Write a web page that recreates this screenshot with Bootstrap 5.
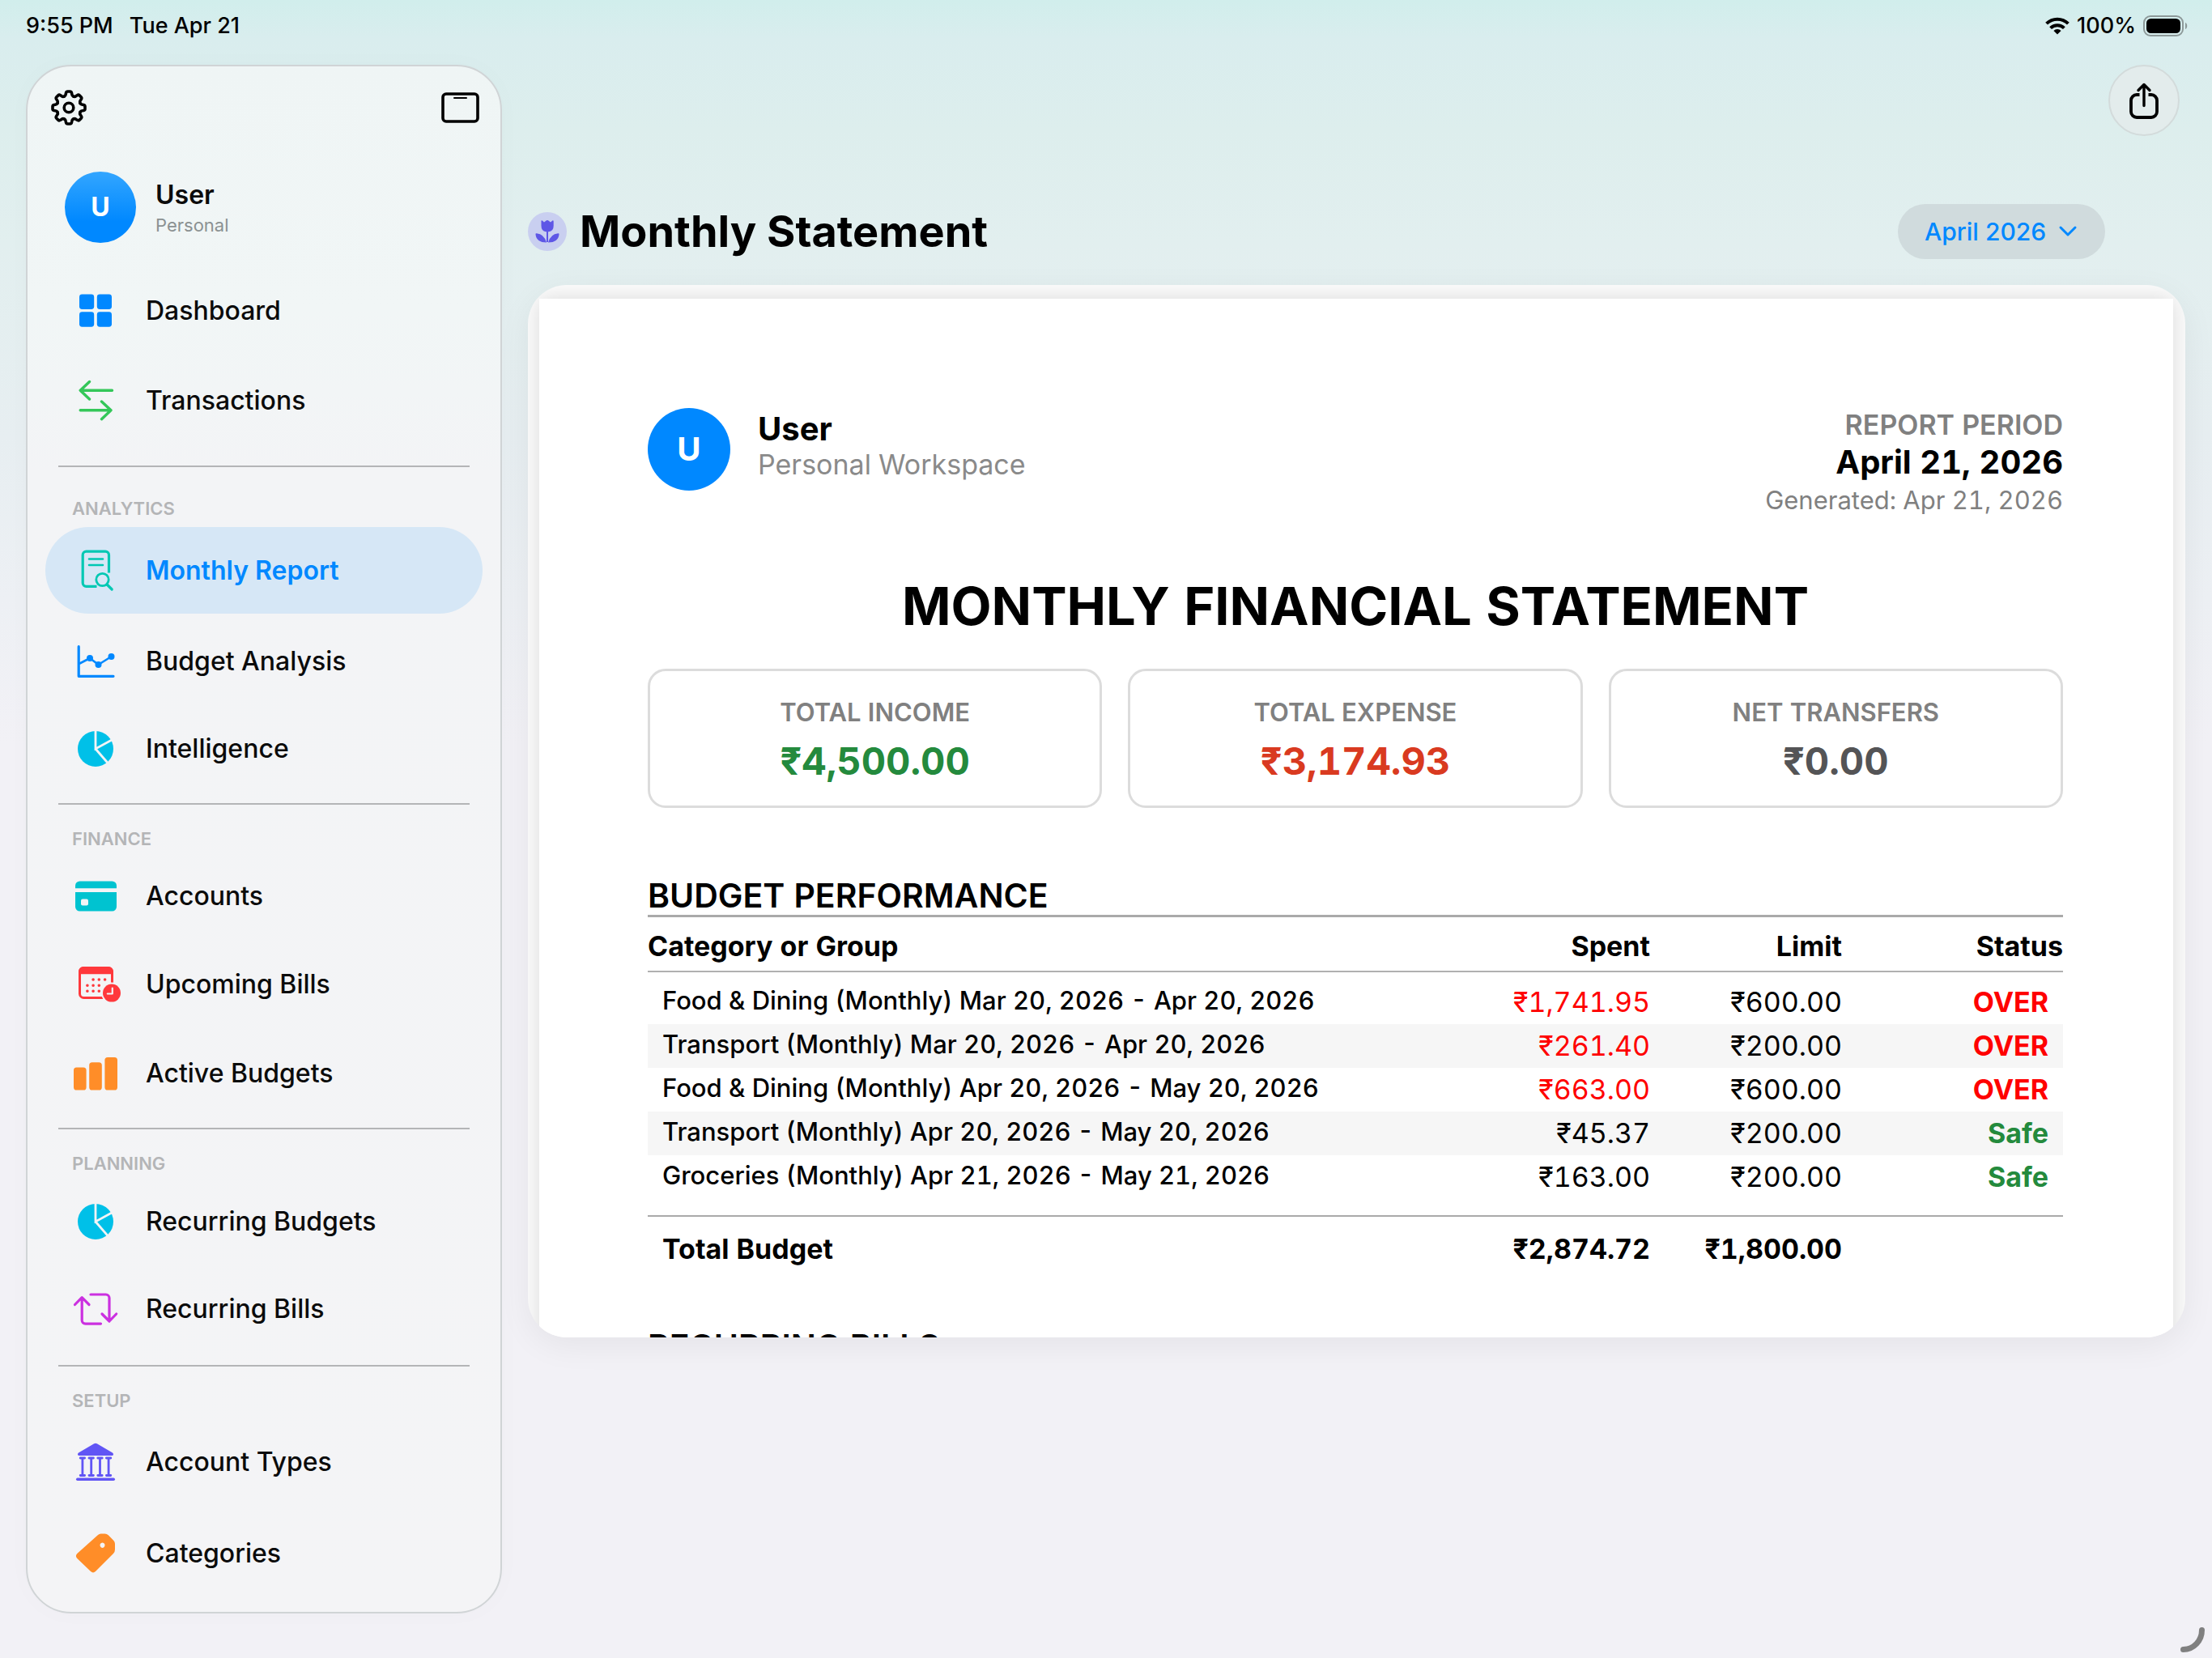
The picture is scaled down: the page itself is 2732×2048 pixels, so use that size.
<!DOCTYPE html>
<html lang="en">
<head>
<meta charset="utf-8">
<meta name="viewport" content="width=device-width, initial-scale=1">
<title>Monthly Statement</title>
<link href="https://cdn.jsdelivr.net/npm/bootstrap@5.3.0/dist/css/bootstrap.min.css" rel="stylesheet">
<style>
  :root { --blue: #0088ff; --line: #b4b5b7; }
  body {
    font-family: Inter, "Liberation Sans", sans-serif;
    font-size: 32px;
    line-height: 40px;
    color: #000;
    background: linear-gradient(180deg, #d1eeec 0, #d9edee 48px, #ddeeed 160px, #e2efef 300px, #e7eef1 540px, #edf0f4 740px, #f2f1f6 920px, #f2f1f6 100%) no-repeat;
  }
  a { text-decoration: none; color: inherit; }
  svg { display: block; flex: none; overflow: visible; }
  .stroke-icon { fill: none; stroke: currentColor; stroke-linecap: round; stroke-linejoin: round; }

  /* status bar */
  .status-bar { height: 64px; padding: 0 30px 0 32px; font-size: 27px; font-weight: 500; }
  .status-left { gap: 20px; }
  .status-right { gap: 9px; }

  /* sidebar */
  .layout { padding: 16px 33px 57px 32px; gap: 32px; }
  .sidebar {
    flex: 0 0 588px;
    padding: 29px 22px 20px 22px;
    border: 2px solid #d0d4d6;
    border-radius: 56px;
    background: linear-gradient(180deg, #eff5f5 0, #f1f6f6 300px, #f3f4f6 500px, #f4f4f6 100%);
    box-shadow: 0 0 32px rgba(0, 0, 0, .02);
    color: #0b0b0b;
  }
  .icon-btn { border: 0; padding: 0; background: none; color: #000; }
  .side-tools { padding: 0 4px 0 7px; height: 44px; }
  .profile { padding: 57px 0 34px 24px; gap: 24px; }
  .profile-text { padding-top: 5px; }
  .avatar { border-radius: 50%; color: #fff; font-weight: 700; }
  .avatar-side { width: 88px; height: 88px; font-size: 32px; background: linear-gradient(180deg, #33a6ff, #0088ff 70%); }
  .profile-name { font-weight: 600; line-height: 38px; }
  .profile-kind { font-size: 22px; line-height: 36px; color: #8b9192; }
  .side-link { padding: 28px 32px; gap: 32px; border-radius: 54px; font-weight: 500; }
  .side-link.active { background: #d6e7f6; color: var(--blue); font-weight: 600; }
  .side-group { gap: 8px; }
  .side-rule { margin: 18px 16px 0; height: 2px; background: var(--line); }
  .side-label { margin: 0 0 0 33px; padding: 27px 0 8px; font-size: 22px; line-height: 30px; font-weight: 600; color: #b4b5b7; }
  .side-rule.first { margin-top: 27px; margin-bottom: 9px; }

  /* page head */
  .share-btn { width: 88px; height: 88px; border: 2px solid #d3dbdb; border-radius: 50%; background: #e3ecec; color: #000; margin-right: 7px; }
  .page-head { margin: 84px 99px 32px 0; }
  .badge-dot { width: 48px; height: 48px; border-radius: 50%; background: #c9cff0; }
  .page-title { font-size: 54px; line-height: 68px; font-weight: 700; margin: 0 0 0 16px; }
  .month-select {
    width: auto; height: 68px; padding: 0 72px 0 33px;
    border: 0; border-radius: 34px;
    color: var(--blue); font-size: 30px; font-weight: 500;
    background: #d0dbdd url("data:image/svg+xml,%3Csvg xmlns='http://www.w3.org/2000/svg' viewBox='0 0 24 16'%3E%3Cpath d='M3 3l9 9 9-9' fill='none' stroke='%230088ff' stroke-width='3' stroke-linecap='round' stroke-linejoin='round'/%3E%3C/svg%3E") no-repeat right 34px center / 24px 16px;
  }

  /* report */
  .report-frame {
    height: calc(100vh - 748px);
    padding: 17px 15px 0 14px;
    border-radius: 48px;
    background: #fcfcfc;
    box-shadow: 0 10px 40px rgba(0, 0, 0, .06);
    overflow: hidden;
  }
  .report-sheet { min-height: 1600px; padding: 135px 136px 135px 134px; background: #fff; box-shadow: 0 0 26px rgba(0, 0, 0, .14); font-variant-numeric: tabular-nums; }
  .report-owner { gap: 34px; }
  .avatar-report { width: 102px; height: 102px; font-size: 40px; background: var(--blue); }
  .report-user { font-size: 40px; font-weight: 700; line-height: 44px; }
  .report-sub { font-size: 34px; line-height: 44px; color: #8a8a8a; }
  .meta-cap { font-size: 34px; line-height: 42px; font-weight: 600; color: #808080; }
  .meta-date { font-size: 40px; line-height: 50px; font-weight: 700; }
  .meta-gen { font-size: 31px; line-height: 44px; color: #808080; }
  .report-title { font-size: 65px; line-height: 80px; font-weight: 700; margin: 69px 0 37px; }
  .totals { gap: 32px; }
  .total-box { height: 172px; padding-top: 7px; border: 3px solid #dcdcdc; border-radius: 22px; background: #fff; }
  .total-cap { font-size: 31px; line-height: 40px; font-weight: 600; color: #808080; }
  .total-value { font-size: 47px; line-height: 64px; font-weight: 700; margin-top: 8px; }
  .tone-good { color: #248a3d !important; }
  .tone-bad { color: #d93a20; }
  .tone-flat { color: #545456; }
  .tone-over { color: #ff0000 !important; }
  .section-title { font-size: 41px; line-height: 48px; font-weight: 600; margin: 84px 0 0; }
  .budget-table { table-layout: fixed; margin: 0; border-top: 3px solid #aaa; --bs-table-bg: transparent; --bs-table-color: #000; color: #000; }
  .budget-table > :not(caption) > * > * { padding: 0; text-align: right; line-height: 54px; font-size: 34px; white-space: nowrap; }
  .budget-table > thead > tr > th { padding-top: 6px; line-height: 60px; font-weight: 700; border-bottom: 2px solid #b0b0b0; }
  .budget-table > :not(caption) > * > :first-child { text-align: left; }
  .budget-table > tbody::before, .budget-table > tbody::after { content: ""; display: block; height: 10px; }
  .budget-table > tbody::after { height: 20px; }
  .budget-table > tbody > tr > :first-child { padding-left: 18px; font-size: 31px; line-height: 50px; font-weight: 500; vertical-align: top; }
  .budget-table > tbody > tr > :last-child { padding-right: 18px; font-weight: 700; }
  .budget-table > tbody > tr:nth-child(even) > * { background: #f6f6f6; }
  .budget-table > tfoot > tr > * { line-height: 80px; font-weight: 700; border-top: 2px solid #aaa; }
  .budget-table > tfoot > tr > :first-child { padding-left: 18px; }
  .col-amount { width: 237px; }
  .col-status { width: 273px; }
  .section-title.next { margin-top: 56px; }
  .corner-mark { position: absolute; right: 9px; bottom: 9px; color: #808080; }
</style>
</head>
<body class="min-vh-100 d-flex flex-column position-relative">

<header class="status-bar d-flex align-items-center justify-content-between">
  <div class="status-left d-flex"><span>9:55 PM</span><span>Tue Apr 21</span></div>
  <div class="status-right d-flex align-items-center">
    <svg width="30" height="22" viewBox="0 0 30 22" aria-label="Wi-Fi">
      <g fill="none" stroke="#000" stroke-width="4"><path d="M1.6 8.2a19 19 0 0 1 26.8 0"/><path d="M6.6 13.6a12 12 0 0 1 16.8 0"/></g>
      <path d="M15 21.5l-4.6-4.6a6.5 6.5 0 0 1 9.2 0z"/>
    </svg>
    <span>100%</span>
    <svg width="55" height="26" viewBox="0 0 55 26" aria-label="Battery full">
      <rect x="1" y="1" width="48" height="24" rx="8" fill="none" stroke="#8d9999" stroke-width="2"/>
      <rect x="4" y="4" width="42" height="18" rx="5.5"/>
      <path d="M52 9c3 1 3 7 0 8z" fill="#8d9999"/>
    </svg>
  </div>
</header>

<div class="layout d-flex align-items-start">
  <aside class="sidebar">
    <div class="side-tools d-flex align-items-center justify-content-between">
      <button class="icon-btn" type="button" aria-label="Settings">
        <svg width="44" height="44" viewBox="-22 -22 44 44" class="stroke-icon" stroke-width="3.6">
          <defs><path id="tooth" d="M-5.74-13.86C-4.35-14.43-4-15.2-3.8-16.6L-3.5-18.2Q-3.1-20-1.4-20H1.4Q3.1-20 3.5-18.2L3.8-16.6C4-15.2 4.35-14.43 5.74-13.86"/></defs>
          <use href="#tooth"/><use href="#tooth" transform="rotate(45)"/><use href="#tooth" transform="rotate(90)"/><use href="#tooth" transform="rotate(135)"/>
          <use href="#tooth" transform="rotate(180)"/><use href="#tooth" transform="rotate(225)"/><use href="#tooth" transform="rotate(270)"/><use href="#tooth" transform="rotate(315)"/>
          <circle r="5.8"/>
        </svg>
      </button>
      <button class="icon-btn" type="button" aria-label="Toggle sidebar">
        <svg width="47" height="38" viewBox="0 0 47 38" class="stroke-icon"><rect x="2" y="2" width="43" height="34" rx="4" stroke-width="3.6"/><path d="M16 7h15" stroke-width="2"/></svg>
      </button>
    </div>

    <div class="profile d-flex align-items-center">
      <div class="avatar avatar-side d-flex align-items-center justify-content-center">U</div>
      <div class="profile-text"><div class="profile-name">User</div><div class="profile-kind">Personal</div></div>
    </div>

    <nav>
      <div class="side-group d-flex flex-column">
        <a href="#" class="side-link d-flex align-items-center">
          <svg width="60" height="43" viewBox="0 0 60 43" fill="#0088ff"><g transform="translate(10 1.5)"><rect width="18.2" height="18.4" rx="3.4"/><rect x="21.8" width="18.2" height="18.4" rx="3.4"/><rect y="21.8" width="18.2" height="18.4" rx="3.4"/><rect x="21.8" y="21.8" width="18.2" height="18.4" rx="3.4"/></g></svg>
          Dashboard</a>
        <a href="#" class="side-link d-flex align-items-center">
          <svg width="60" height="51" viewBox="0 0 60 51" class="stroke-icon" color="#34c759" stroke-width="3.4"><g transform="translate(9.5 .5)"><path d="M13 2L1.7 12.7 13 23.5M2.5 12.7H41M28 26.5l11.5 10.8L28 48.2M39 37.3H1.7"/></g></svg>
          Transactions</a>
      </div>
      <div class="side-rule first"></div>

      <h2 class="side-label">ANALYTICS</h2>
      <div class="side-group d-flex flex-column">
        <a href="#" class="side-link active d-flex align-items-center" aria-current="page">
          <svg width="60" height="51" viewBox="0 0 60 51" class="stroke-icon" color="#00c8b3" stroke-width="3.2"><g transform="translate(12 0)"><path stroke-linecap="butt" d="M34.5 28.5V6.5a4.3 4.3 0 0 0-4.3-4.3H6.5a4.3 4.3 0 0 0-4.3 4.3V41a4.3 4.3 0 0 0 4.3 4.3H19.5"/><path stroke-width="2.6" d="M10 11.5h17M10 19h17"/><circle cx="26.5" cy="37" r="7.7" stroke-width="2.8"/><path d="M32.2 43l6 6"/></g></svg>
          Monthly Report</a>
        <a href="#" class="side-link d-flex align-items-center">
          <svg width="60" height="46" viewBox="0 0 60 46" class="stroke-icon" color="#0088ff" stroke-width="3.2"><g transform="translate(7.5 3)"><path d="M1.7 1.7V38.3H44.5"/><path stroke-width="2.6" d="M3 22.5L15.5 16 26 24 42 14"/><g fill="currentColor" stroke="none"><circle cx="15.5" cy="16" r="4"/><circle cx="26" cy="24" r="4"/><circle cx="42" cy="14" r="4"/></g></g></svg>
          Budget Analysis</a>
        <a href="#" class="side-link d-flex align-items-center">
          <svg width="60" height="42" viewBox="0 0 60 42"><g transform="translate(8 -1)"><circle cx="22" cy="22" r="22" fill="#00c0e8"/><path d="M22-1V22L42 11M22 22L38 40.5" fill="none" stroke="#f3f4f6" stroke-width="2.8"/></g></svg>
          Intelligence</a>
      </div>
      <div class="side-rule"></div>

      <h2 class="side-label">FINANCE</h2>
      <div class="side-group d-flex flex-column">
        <a href="#" class="side-link d-flex align-items-center">
          <svg width="60" height="38" viewBox="0 0 60 38"><g transform="translate(5 .5)"><rect width="51" height="37" rx="5.5" fill="#00c3d0"/><path d="M0 8.7h51v4.9H0z" fill="#f3f4f6"/><rect x="7" y="22" width="9" height="8" rx="2" fill="#f3f4f6"/></g></svg>
          Accounts</a>
        <a href="#" class="side-link d-flex align-items-center">
          <svg width="60" height="50" viewBox="0 0 60 50"><g transform="translate(9 3)"><rect x="1.5" y="1.5" width="40" height="37" rx="5" fill="none" stroke="#ff383c" stroke-width="3"/><path d="M0 10.5V6a6 6 0 0 1 6-6H37a6 6 0 0 1 6 6v4.5q-1-1.3-3-1.3H3q-2 0-3 1.3z" fill="#ff383c"/><path d="M18 16h.2M25.2 16h.2M32.5 16h.2M10.8 23.2h.2M18 23.2h.2M25.2 23.2h.2M10.8 30.3h.2M18 30.3h.2M25.2 30.3h.2" stroke="#ff383c" stroke-width="3.4" stroke-linecap="round"/><circle cx="41" cy="32.6" r="13" fill="#f3f4f6"/><circle cx="41" cy="32.6" r="11" fill="#ff383c"/><path d="M41.8 26.5v7h-6" fill="none" stroke="#f3f4f6" stroke-width="2.2" stroke-linecap="round" stroke-linejoin="round"/></g></svg>
          Upcoming Bills</a>
        <a href="#" class="side-link d-flex align-items-center">
          <svg width="60" height="42" viewBox="0 0 60 42" fill="#ff8d28"><g transform="translate(3 1)"><rect y="12.5" width="15.6" height="28" rx="3.6"/><rect x="19.2" y="6.2" width="15.6" height="34.3" rx="3.6"/><rect x="38.4" width="15.6" height="40.5" rx="3.6"/></g></svg>
          Active Budgets</a>
      </div>
      <div class="side-rule"></div>

      <h2 class="side-label">PLANNING</h2>
      <div class="side-group d-flex flex-column">
        <a href="#" class="side-link d-flex align-items-center">
          <svg width="60" height="42" viewBox="0 0 60 42"><g transform="translate(8 -1)"><circle cx="22" cy="22" r="22" fill="#00c0e8"/><path d="M22-1V22L42 11M22 22L38 40.5" fill="none" stroke="#f3f4f6" stroke-width="2.8"/></g></svg>
          Recurring Budgets</a>
        <a href="#" class="side-link d-flex align-items-center">
          <svg width="60" height="46" viewBox="0 0 60 46" class="stroke-icon" color="#cb30e0" stroke-width="3.2"><g transform="translate(0 3)"><path d="M4.5 14.5L13.2 5.7 22 14.5M13.2 6.5V33.8a4.3 4.3 0 0 0 4.3 4.3H36.5M24 2H42.7A4.3 4.3 0 0 1 47 6.3V34M38 26l9 9 8.7-9"/></g></svg>
          Recurring Bills</a>
      </div>
      <div class="side-rule"></div>

      <h2 class="side-label">SETUP</h2>
      <div class="side-group d-flex flex-column">
        <a href="#" class="side-link d-flex align-items-center">
          <svg width="60" height="49" viewBox="0 0 60 49" fill="#6155f5"><g transform="translate(6 1.5)"><path d="M22.2.8q1.8-1.2 3.6 0L45 12q1.8 1.4.8 2.8-.4.7-1.400.7H3.6q-1 0-1.4-.7-1-1.4.8-2.8z"/><path d="M5.2 18.5h5.4M5.2 40h5.4M7.9 18.5V40M16 18.5h5.4M16 40h5.4M18.7 18.5V40M26.8 18.5h5.4M26.8 40h5.4M29.5 18.5V40M37.4 18.5h5.4M37.4 40h5.4M40.1 18.5V40" fill="none" stroke="#6155f5" stroke-width="2.8" stroke-linecap="round"/><path d="M1.7 44.8H46.3" stroke="#6155f5" stroke-width="3.4" stroke-linecap="round"/></g></svg>
          Account Types</a>
        <a href="#" class="side-link d-flex align-items-center">
          <svg width="60" height="49" viewBox="0 0 60 49"><g transform="translate(6 .5)"><path fill="#ff8d28" fill-rule="evenodd" d="M27 1.5Q28.5 0 30.5 0H35.5Q38 0 39.8 1.8L46.2 8.2Q48 10 48 12.5V19.5Q48 22.5 46 24.5L24 46.5Q21 49.3 18 46.5L1.3 30.5Q-1.5 27.5 1.3 24.5ZM32.5 11a3 3.2 0 1 0 .01 0z"/></g></svg>
          Categories</a>
      </div>
    </nav>
  </aside>

  <main class="flex-grow-1">
    <div class="d-flex justify-content-end">
      <button type="button" class="share-btn d-flex align-items-center justify-content-center p-0" aria-label="Share">
        <svg width="36" height="46" viewBox="0 0 36 46" class="stroke-icon" stroke-width="3.8"><path stroke-linecap="butt" d="M12.5 16H9a7 7 0 0 0-7 7V37a7 7 0 0 0 7 7H27a7 7 0 0 0 7-7V23a7 7 0 0 0-7-7H23.5"/><path stroke-width="3.4" d="M18 4V29.5M11 10.5L18 3.5 25 10.5"/></svg>
      </button>
    </div>

    <div class="page-head d-flex align-items-center">
      <span class="badge-dot d-flex align-items-center justify-content-center">
        <svg width="30" height="28" viewBox="0 0 30 28" fill="#5e56e6"><path d="M7.5 2.2Q7-.3 8.8.4L11 2.5 14 .3Q15-.4 16 .3L19 2.5 21.3.4Q23-.3 22.7 2.2V7q0 6.3-6 7.3h-3.4q-5.8-1-5.8-7.3z"/><path d="M14 14h2v13h-2z"/><path d="M14 27.5Q1.5 27.5.5 17.5q-.2-1.5 1.3-1.3Q11 17 14 27.5zM16 27.5q12.500 0 13.5-10 .2-1.5-1.3-1.3Q19 17 16 27.5z"/></svg>
      </span>
      <h1 class="page-title">Monthly Statement</h1>
      <select id="month" class="form-select month-select ms-auto" aria-label="Statement month"><option>April 2026</option></select>
    </div>

    <div class="report-frame">
      <article class="report-sheet">
        <div class="d-flex justify-content-between align-items-start">
          <div class="report-owner d-flex align-items-start">
            <div class="avatar avatar-report d-flex align-items-center justify-content-center">U</div>
            <div class="pt-1"><div class="report-user">User</div><div class="report-sub">Personal Workspace</div></div>
          </div>
          <div class="text-end">
            <div class="meta-cap">REPORT PERIOD</div>
            <div class="meta-date">April 21, 2026</div>
            <div class="meta-gen">Generated: Apr 21, 2026</div>
          </div>
        </div>

        <h2 class="report-title text-center">MONTHLY FINANCIAL STATEMENT</h2>

        <div class="totals d-flex text-center">
          <div class="total-box flex-fill w-100 d-flex flex-column justify-content-center"><div class="total-cap">TOTAL INCOME</div><div class="total-value tone-good">₹4,500.00</div></div>
          <div class="total-box flex-fill w-100 d-flex flex-column justify-content-center"><div class="total-cap">TOTAL EXPENSE</div><div class="total-value tone-bad">₹3,174.93</div></div>
          <div class="total-box flex-fill w-100 d-flex flex-column justify-content-center"><div class="total-cap">NET TRANSFERS</div><div class="total-value tone-flat">₹0.00</div></div>
        </div>

        <h3 class="section-title">BUDGET PERFORMANCE</h3>
        <table class="table table-borderless budget-table">
          <colgroup><col><col class="col-amount"><col class="col-amount"><col class="col-status"></colgroup>
          <thead><tr><th scope="col">Category or Group</th><th scope="col">Spent</th><th scope="col">Limit</th><th scope="col">Status</th></tr></thead>
          <tbody>
            <tr><td>Food &amp; Dining (Monthly) Mar 20, 2026 - Apr 20, 2026</td><td class="tone-over">₹1,741.95</td><td>₹600.00</td><td class="tone-over">OVER</td></tr>
            <tr><td>Transport (Monthly) Mar 20, 2026 - Apr 20, 2026</td><td class="tone-over">₹261.40</td><td>₹200.00</td><td class="tone-over">OVER</td></tr>
            <tr><td>Food &amp; Dining (Monthly) Apr 20, 2026 - May 20, 2026</td><td class="tone-over">₹663.00</td><td>₹600.00</td><td class="tone-over">OVER</td></tr>
            <tr><td>Transport (Monthly) Apr 20, 2026 - May 20, 2026</td><td>₹45.37</td><td>₹200.00</td><td class="tone-good">Safe</td></tr>
            <tr><td>Groceries (Monthly) Apr 21, 2026 - May 21, 2026</td><td>₹163.00</td><td>₹200.00</td><td class="tone-good">Safe</td></tr>
          </tbody>
          <tfoot><tr><td>Total Budget</td><td>₹2,874.72</td><td>₹1,800.00</td><td></td></tr></tfoot>
        </table>

        <h3 class="section-title next">RECURRING BILLS</h3>
      </article>
    </div>
  </main>
</div>

<svg class="corner-mark stroke-icon" width="30" height="31" viewBox="0 0 30 31" stroke-width="7" aria-hidden="true"><path d="M26.5 3.5c0 13-10 24-23 24"/></svg>

<script src="https://cdn.jsdelivr.net/npm/bootstrap@5.3.0/dist/js/bootstrap.bundle.min.js"></script>
</body>
</html>
